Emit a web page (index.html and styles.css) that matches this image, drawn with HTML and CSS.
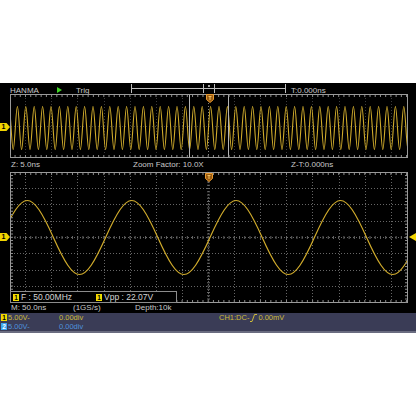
FILE: index.html
```html
<!DOCTYPE html>
<html>
<head>
<meta charset="utf-8">
<link rel="stylesheet" href="styles.css">
</head>
<body>
<div class="scope">
  <div class="topbar">
    <span class="txt">HANMA</span>
    <span class="run"></span>
    <span class="txt">Trig</span>
    <svg class="membar" width="155" height="11" viewBox="0 0 155 11">
      <g stroke="#bdbdbd" fill="none">
        <path d="M0.5 1V10M154.5 1V10M1 5.5H154"/>
        <path d="M72.5 1V10M83.5 1V10"/>
      </g>
      <circle cx="78" cy="3" r="1" fill="#e0e0e0"/>
    </svg>
    <span class="txt tpos">T:0.000ns</span>
  </div>

  <div class="wrow top">
    <div class="gut-l"><span class="chmark">1</span></div>
    <svg class="wv" width="398" height="64" viewBox="0 0 398 64">
      <defs>
        <path id="tw" d="M0,34c1.78,-28.67 2.42,-28.67 4.2,0s2.42,28.67 4.2,0s2.42,-28.67 4.2,0s2.42,28.67 4.2,0s2.42,-28.67 4.2,0s2.42,28.67 4.2,0s2.42,-28.67 4.2,0s2.42,28.67 4.2,0s2.42,-28.67 4.2,0s2.42,28.67 4.2,0s2.42,-28.67 4.2,0s2.42,28.67 4.2,0s2.42,-28.67 4.2,0s2.42,28.67 4.2,0s2.42,-28.67 4.2,0s2.42,28.67 4.2,0s2.42,-28.67 4.2,0s2.42,28.67 4.2,0s2.42,-28.67 4.2,0s2.42,28.67 4.2,0"/>
      </defs>
      <path d="M15.5 4V60M41.5 4V60M67.5 4V60M94.5 4V60M120.5 4V60M146.5 4V60M172.5 4V60M224.5 4V60M250.5 4V60M276.5 4V60M302.5 4V60M329.5 4V60M355.5 4V60M381.5 4V60M1 32.5H397" stroke="#3c3c3c" stroke-dasharray="1 2" fill="none"/>
      <path d="M198.5 9V63" stroke="#808080" stroke-dasharray="1 2"/>
      <g fill="none" stroke="#d1ac2c" stroke-width="1.1">
        <use href="#tw" x="-3.1"/>
        <use href="#tw" x="80.9"/>
        <use href="#tw" x="164.9"/>
        <use href="#tw" x="248.9"/>
        <use href="#tw" x="332.9"/>
      </g>
      <path d="M179.5 0V64M218.5 0V64" stroke="#b5b5b5"/>
      <rect x="0.5" y="0.5" width="397" height="63" fill="none" stroke="#9a9a9a"/>
      <line x1="0" y1="2" x2="398" y2="2" stroke="#8c8c8c" stroke-width="2" stroke-dasharray="1 4.22" stroke-dashoffset="0.66"/>
      <line x1="0" y1="62" x2="398" y2="62" stroke="#8c8c8c" stroke-width="2" stroke-dasharray="1 4.22" stroke-dashoffset="0.66"/>
      <g transform="translate(196,0)">
        <path d="M0.5 0.5H7.5V5.5L4 8.5L0.5 5.5Z" fill="#9a5a10" stroke="#e89a30"/>
        <path d="M2.5 2.5H5.5M4 2.5V6" stroke="#f0c060"/>
      </g>
    </svg>
    <div class="gut-r"></div>
  </div>

  <div class="zrow">
    <span>Z: 5.0ns</span>
    <span>Zoom Factor: 10.0X</span>
    <span>Z-T:0.000ns</span>
  </div>

  <div class="wrow bottom">
    <div class="gut-l"><span class="chmark">1</span></div>
    <div class="win">
      <svg class="wv" width="398" height="131" viewBox="0 0 398 131">
        <path d="M15.5 1V130M41.5 1V130M67.5 1V130M94.5 1V130M120.5 1V130M146.5 1V130M172.5 1V130M198.5 1V130M224.5 1V130M250.5 1V130M276.5 1V130M302.5 1V130M329.5 1V130M355.5 1V130M381.5 1V130" stroke="#666" stroke-dasharray="1 2" fill="none"/>
        <path d="M1 16.5H397M1 32.5H397M1 49.5H397M1 65.5H397M1 81.5H397M1 98.5H397M1 114.5H397" stroke="#666" stroke-dasharray="1 2" fill="none"/>
        <line x1="0" y1="65.5" x2="398" y2="65.5" stroke="#666" stroke-width="3" stroke-dasharray="1 4.22" stroke-dashoffset="0.66"/>
        <line x1="198.5" y1="0" x2="198.5" y2="131" stroke="#666" stroke-width="3" stroke-dasharray="1 2.25" stroke-dashoffset="0.25"/>
        <path d="M-8.8,65.5c22.15,-49.33 30.05,-49.33 52.2,0s30.05,49.33 52.2,0s30.05,-49.33 52.2,0s30.05,49.33 52.2,0s30.05,-49.33 52.2,0s30.05,49.33 52.2,0s30.05,-49.33 52.2,0s30.05,49.33 52.2,0" fill="none" stroke="#d1ac2c" stroke-width="1.2"/>
        <rect x="0.5" y="0.5" width="397" height="130" fill="none" stroke="#9a9a9a"/>
        <line x1="0" y1="2" x2="398" y2="2" stroke="#8c8c8c" stroke-width="2" stroke-dasharray="1 4.22" stroke-dashoffset="0.66"/>
        <line x1="0" y1="129" x2="398" y2="129" stroke="#8c8c8c" stroke-width="2" stroke-dasharray="1 4.22" stroke-dashoffset="0.66"/>
        <line x1="2" y1="0" x2="2" y2="131" stroke="#8c8c8c" stroke-width="2" stroke-dasharray="1 2.25" stroke-dashoffset="0.25"/>
        <line x1="396" y1="0" x2="396" y2="131" stroke="#8c8c8c" stroke-width="2" stroke-dasharray="1 2.25" stroke-dashoffset="0.25"/>
        <g transform="translate(195,1)">
          <path d="M0.5 0.5H7.5V5.5L4 8.5L0.5 5.5Z" fill="#9a5a10" stroke="#e89a30"/>
          <path d="M2.5 2.5H5.5M4 2.5V6" stroke="#f0c060"/>
        </g>
      </svg>
      <div class="meas">
        <div class="mcell"><span class="badge b1">1</span><span>F : 50.00MHz</span></div>
        <div class="mcell"><span class="badge b1">1</span><span>Vpp : 22.07V</span></div>
      </div>
    </div>
    <div class="gut-r"><span class="tlevel"></span></div>
  </div>

  <div class="mrow">
    <span>M: 50.0ns</span>
    <span>(1GS/s)</span>
    <span>Depth:10k</span>
  </div>

  <div class="status">
    <div class="srow ch1">
      <span class="badge b1">1</span>
      <span>5.00V-</span>
      <span>0.00div</span>
      <span class="trg">CH1:DC-<svg class="edge" width="7" height="8" viewBox="0 0 7 8"><path d="M0 7.5H2L4.5 0.5H7" fill="none" stroke="#cdbb3a"/></svg> 0.00mV</span>
    </div>
    <div class="srow ch2">
      <span class="badge b2">2</span>
      <span>5.00V-</span>
      <span>0.00div</span>
    </div>
  </div>
</div>
</body>
</html>
```

FILE: styles.css
```css
* { box-sizing: border-box; }
html, body { margin: 0; padding: 0; background: #ffffff; }
body { width: 416px; height: 416px; overflow: hidden; }

.scope {
  margin-top: 83px;
  width: 416px;
  background: #000;
  font-family: "Liberation Sans", Arial, sans-serif;
  font-size: 8px;
  color: #c9c9c9;
}

.topbar {
  height: 11px;
  display: grid;
  grid-template-columns: 47px 19px 55px 155px 1fr;
  grid-template-rows: 11px;
  padding-left: 10px;
}
.topbar .txt { line-height: 11px; padding-top: 2px; white-space: nowrap; }
.run {
  width: 0; height: 0;
  margin-top: 4px;
  border-left: 5px solid #3fd424;
  border-top: 3px solid transparent;
  border-bottom: 3px solid transparent;
}
.membar { display: block; }
.tpos { padding-left: 5px; }

.wrow { display: flex; }
.wrow.top { height: 64px; }
.wrow.bottom { height: 131px; }
.gut-l { width: 10px; position: relative; }
.gut-r { width: 8px; position: relative; }
.win { position: relative; width: 398px; height: 131px; }
.wv { display: block; }

.chmark {
  position: absolute;
  left: 0;
  width: 10px;
  height: 8px;
  background: #f2d400;
  clip-path: polygon(0 0, 65% 0, 100% 50%, 65% 100%, 0 100%);
  color: #000;
  font-size: 7px;
  font-weight: bold;
  line-height: 8px;
  padding-left: 1.5px;
}
.top .chmark { top: 29px; }
.bottom .chmark { top: 61px; }

.tlevel {
  position: absolute;
  top: 61px;
  right: 0;
  width: 0; height: 0;
  border-right: 7px solid #f2d400;
  border-top: 4px solid transparent;
  border-bottom: 4px solid transparent;
}

.zrow {
  height: 14px;
  line-height: 14px;
  display: grid;
  grid-template-columns: 122px 158px 1fr;
  padding-left: 11px;
  white-space: nowrap;
}

.meas {
  position: absolute;
  left: 0;
  bottom: 0;
  width: 167px;
  height: 12px;
  border: 1px solid #8c8c8c;
  background: #000;
  display: grid;
  grid-template-columns: 83px 1fr;
  align-items: center;
  padding-left: 2px;
  font-size: 8.5px;
  color: #d4d4d4;
}
.mcell { display: flex; align-items: center; gap: 2px; white-space: nowrap; line-height: 10px; }

.badge {
  display: inline-block;
  width: 6px;
  height: 7px;
  font-size: 6.5px;
  line-height: 7px;
  text-align: center;
  font-weight: bold;
}
.b1 { background: #f2dc00; color: #000; }
.b2 { background: #3aa6ee; color: #fff; }

.mrow {
  height: 10px;
  line-height: 10px;
  display: grid;
  grid-template-columns: 62px 62px 1fr;
  padding-left: 11px;
  white-space: nowrap;
}

.status {
  height: 20px;
  background: #3a3c56;
  border-bottom: 2px solid #6a6c80;
  font-size: 7.5px;
}
.srow {
  height: 9px;
  line-height: 9px;
  display: grid;
  grid-template-columns: 7px 51px 160px 1fr;
  align-items: center;
  padding-left: 1px;
  white-space: nowrap;
}
.ch1 { color: #cdbb3a; }
.ch2 { color: #4f92dc; }
.trg { display: flex; align-items: center; gap: 1px; }
.edge { display: block; }
```
